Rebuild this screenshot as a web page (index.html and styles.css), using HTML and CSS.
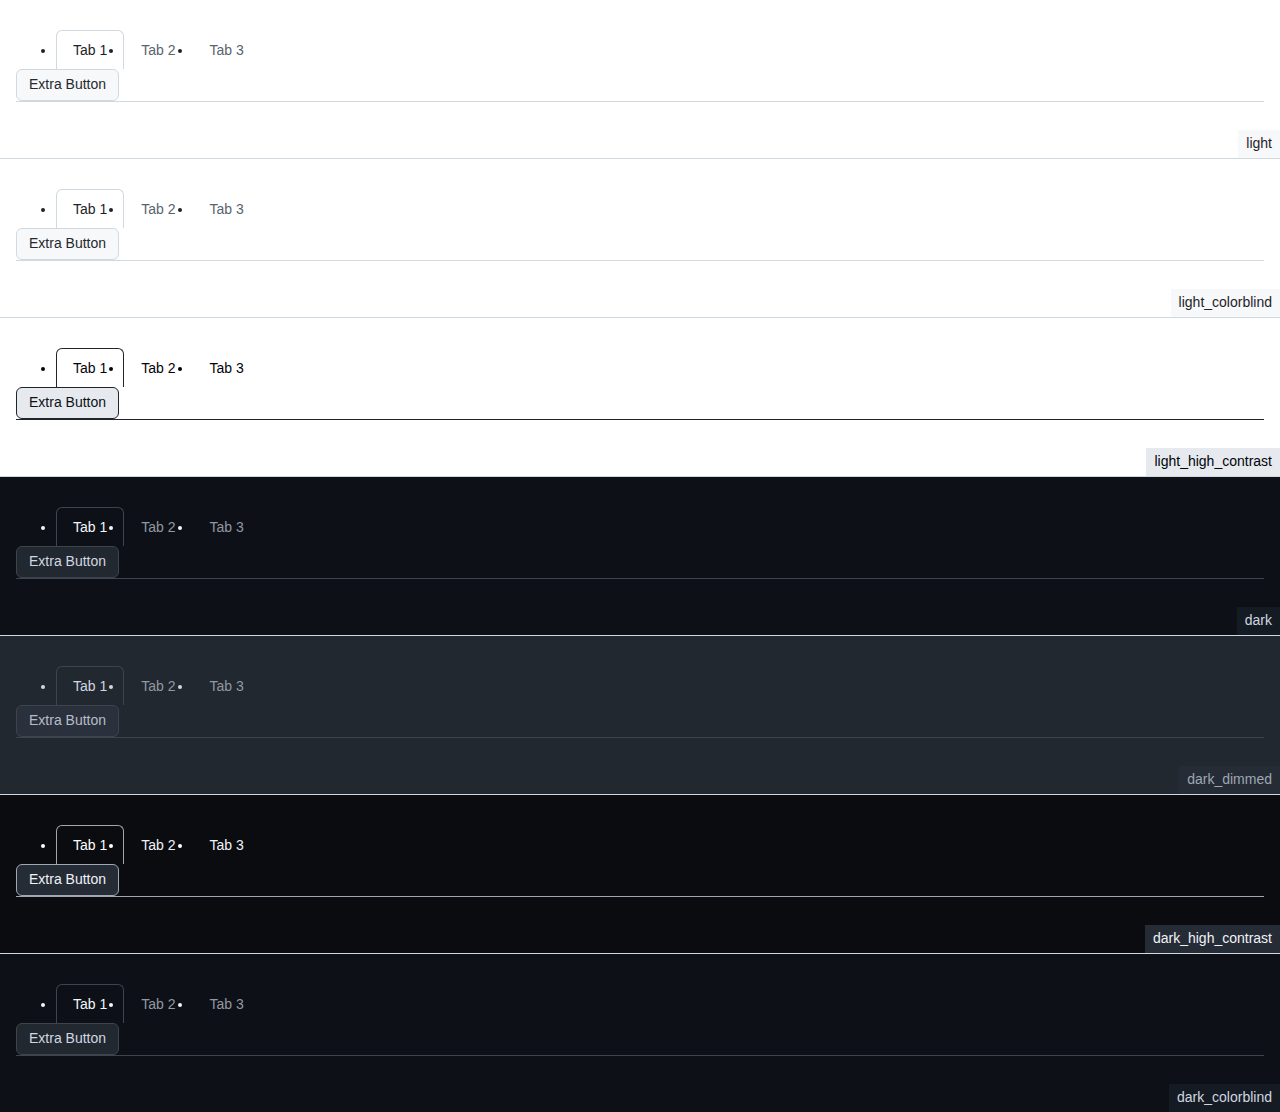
FILE: index.html
```html
<!DOCTYPE html>
<html>
<head>
<meta charset="utf-8">
<link rel="stylesheet" href="styles.css">
</head>
<body>
<div class="theme t-light">
  <div class="nav"><ul class="tabs"><li class="tab"><a class="tab-link selected">Tab 1</a></li><li class="tab"><a class="tab-link">Tab 2</a></li><li class="tab"><a class="tab-link">Tab 3</a></li></ul><button class="btn">Extra Button</button></div>
  <div class="label">light</div>
</div>
<div class="theme t-light">
  <div class="nav"><ul class="tabs"><li class="tab"><a class="tab-link selected">Tab 1</a></li><li class="tab"><a class="tab-link">Tab 2</a></li><li class="tab"><a class="tab-link">Tab 3</a></li></ul><button class="btn">Extra Button</button></div>
  <div class="label">light_colorblind</div>
</div>
<div class="theme t-lhc">
  <div class="nav"><ul class="tabs"><li class="tab"><a class="tab-link selected">Tab 1</a></li><li class="tab"><a class="tab-link">Tab 2</a></li><li class="tab"><a class="tab-link">Tab 3</a></li></ul><button class="btn">Extra Button</button></div>
  <div class="label">light_high_contrast</div>
</div>
<div class="theme t-dark">
  <div class="nav"><ul class="tabs"><li class="tab"><a class="tab-link selected">Tab 1</a></li><li class="tab"><a class="tab-link">Tab 2</a></li><li class="tab"><a class="tab-link">Tab 3</a></li></ul><button class="btn">Extra Button</button></div>
  <div class="label">dark</div>
</div>
<div class="theme t-dimmed">
  <div class="nav"><ul class="tabs"><li class="tab"><a class="tab-link selected">Tab 1</a></li><li class="tab"><a class="tab-link">Tab 2</a></li><li class="tab"><a class="tab-link">Tab 3</a></li></ul><button class="btn">Extra Button</button></div>
  <div class="label">dark_dimmed</div>
</div>
<div class="theme t-dhc">
  <div class="nav"><ul class="tabs"><li class="tab"><a class="tab-link selected">Tab 1</a></li><li class="tab"><a class="tab-link">Tab 2</a></li><li class="tab"><a class="tab-link">Tab 3</a></li></ul><button class="btn">Extra Button</button></div>
  <div class="label">dark_high_contrast</div>
</div>
<div class="theme t-dark">
  <div class="nav"><ul class="tabs"><li class="tab"><a class="tab-link selected">Tab 1</a></li><li class="tab"><a class="tab-link">Tab 2</a></li><li class="tab"><a class="tab-link">Tab 3</a></li></ul><button class="btn">Extra Button</button></div>
  <div class="label">dark_colorblind</div>
</div>
</body>
</html>
```

FILE: styles.css
```css
html, body {
  margin: 0;
  padding: 0;
}
body {
  font-family: "Liberation Sans", Arial, sans-serif;
  font-size: 14px;
  background: #0d1117;
}
.theme {
  display: flex;
  flex-direction: column;
  padding-top: 30px;
  border-bottom: 1px solid #d1d9e0;
  background: var(--bg);
  color: var(--fg);
}
.nav {
  margin: 0 16px;
  border-bottom: 1px solid var(--line);
}
.tabs {
  display: flex;
  margin: 0;
  padding: 0 0 0 40px;
  list-style: disc;
}
.tab {
  color: var(--fg);
}
.tab-link {
  display: block;
  height: 39px;
  line-height: 39px;
  padding: 0 16px;
  border: 1px solid transparent;
  border-bottom: none;
  border-radius: 6px 6px 0 0;
  color: var(--muted);
  box-sizing: border-box;
}
.tab-link.selected {
  color: var(--fg);
  border-color: var(--tabborder);
}
.btn {
  display: block;
  height: 32px;
  padding: 0 12px 2px;
  font-family: inherit;
  font-size: 14px;
  color: var(--btnfg);
  background: var(--btnbg);
  border: 1px solid var(--btnborder);
  border-radius: 6px;
  margin: 0;
}
.label {
  align-self: flex-end;
  margin-top: 28px;
  height: 28px;
  box-sizing: border-box;
  line-height: 26px;
  padding: 0 8px 2px;
  background: var(--labelbg);
  color: var(--labelfg);
}
.t-light {
  --bg: #ffffff;
  --fg: #1f2328;
  --muted: #59636e;
  --line: #d1d9e0;
  --tabborder: #d1d9e0;
  --btnfg: #25292e;
  --btnbg: #f6f8fa;
  --btnborder: #d1d9e0;
  --labelbg: #f6f8fa;
  --labelfg: #1f2328;
}
.t-lhc {
  --bg: #ffffff;
  --fg: #010409;
  --muted: #010409;
  --line: #20252c;
  --tabborder: #20252c;
  --btnfg: #0e1116;
  --btnbg: #e6eaef;
  --btnborder: #20252c;
  --labelbg: #e6eaef;
  --labelfg: #010409;
}
.t-dark {
  --bg: #0d1117;
  --fg: #f0f6fc;
  --muted: #9198a1;
  --line: #3d444d;
  --tabborder: #3d444d;
  --btnfg: #d1d7e0;
  --btnbg: #212830;
  --btnborder: #3d444d;
  --labelbg: #151b23;
  --labelfg: #d1d7e0;
}
.t-dimmed {
  --bg: #212830;
  --fg: #d1d7e0;
  --muted: #9198a1;
  --line: #3d444d;
  --tabborder: #3d444d;
  --btnfg: #b7bdc8;
  --btnbg: #2a313c;
  --btnborder: #3d444d;
  --labelbg: #262c36;
  --labelfg: #9ea7b3;
}
.t-dhc {
  --bg: #0a0c10;
  --fg: #ffffff;
  --muted: #f0f3f6;
  --line: #9ea7b3;
  --tabborder: #9ea7b3;
  --btnfg: #f0f3f6;
  --btnbg: #262c36;
  --btnborder: #9ea7b3;
  --labelbg: #262c36;
  --labelfg: #f0f3f6;
}
```
